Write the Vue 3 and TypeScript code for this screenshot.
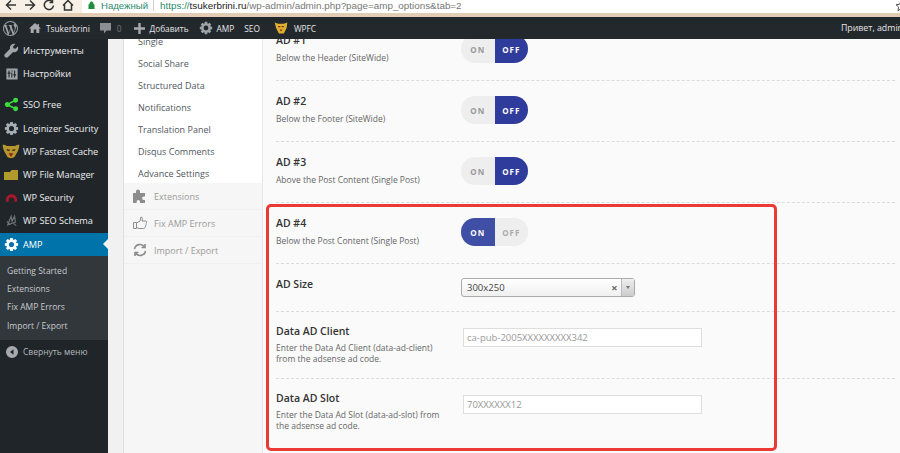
<script setup lang="ts">
type MenuItem = { label: string; icon: string; color: string; gapBefore?: boolean };

function gear(cx: number, cy: number, r: number, hole: number): string {
  // eight teeth around a ring, hole cut with evenodd
  let d = "";
  for (let i = 0; i < 8; i++) {
    const a = (i * Math.PI) / 4;
    const w = 0.24;
    const pts = [
      [r * 0.76, a - w * 1.3],
      [r, a - w * 0.8],
      [r, a + w * 0.8],
      [r * 0.76, a + w * 1.3],
    ];
    for (const [rad, t] of pts) {
      d += `${d ? "L" : "M"}${(cx + rad * Math.cos(t)).toFixed(2)} ${(cy + rad * Math.sin(t)).toFixed(2)}`;
    }
  }
  d += `ZM${cx - hole} ${cy}a${hole} ${hole} 0 1 0 ${hole * 2} 0a${hole} ${hole} 0 1 0 ${-hole * 2} 0Z`;
  return d;
}

const gearPath = gear(10, 10, 9, 3.4);

const topMenu: MenuItem[] = [
  { label: "Инструменты", icon: "wrench", color: "#a0a5aa" },
  { label: "Настройки", icon: "sliders", color: "#a0a5aa" },
  { label: "SSO Free", icon: "share", color: "#3ddc3d", gapBefore: true },
  { label: "Loginizer Security", icon: "gear", color: "#a7adb5" },
  { label: "WP Fastest Cache", icon: "tiger", color: "#b8962e" },
  { label: "WP File Manager", icon: "folder", color: "#b09a2c" },
  { label: "WP Security", icon: "shield", color: "#a5192a" },
  { label: "WP SEO Schema", icon: "seo", color: "#70757a" },
];

const subMenu = ["Getting Started", "Extensions", "Fix AMP Errors", "Import / Export"];
const tabLinks = ["Single", "Social Share", "Structured Data", "Notifications", "Translation Panel", "Disqus Comments", "Advance Settings"];

const adRows = [
  { title: "AD #1", desc: "Below the Header (SiteWide)", on: false },
  { title: "AD #2", desc: "Below the Footer (SiteWide)", on: false },
  { title: "AD #3", desc: "Above the Post Content (Single Post)", on: false },
  { title: "AD #4", desc: "Below the Post Content (Single Post)", on: true },
];

const textRows = [
  { title: "Data AD Client", desc: "Enter the Data Ad Client (data-ad-client) from the adsense ad code.", value: "ca-pub-2005XXXXXXXXX342" },
  { title: "Data AD Slot", desc: "Enter the Data Ad Slot (data-ad-slot) from the adsense ad code.", value: "70XXXXXX12" },
];
</script>

<template>
  <div class="page">
    <header class="browser">
      <div class="nav-icons">
        <svg viewBox="0 0 12 12" width="12" height="12"><path d="M11 6H2M6 1.500 1.500 6 6 10.500" /></svg>
        <svg viewBox="0 0 12 12" width="12" height="12"><path d="M1 6h9M6 1.500 10.500 6 6 10.500" /></svg>
        <svg viewBox="0 0 12 12" width="12" height="12"><path d="M10.500 6.500A4.600 4.600 0 1 1 9 2.500M9.500 0.500v3h-3" /></svg>
        <svg viewBox="0 0 12 12" width="12" height="12"><path d="M1 6.500 6 1.500l5 5M2.500 5.500V11h7V5.500" /></svg>
      </div>
      <div class="omnibox">
        <svg class="lock" viewBox="0 0 8 9" width="7" height="8"><path d="M1 4h6v5H1zM2.200 4V2.600a1.800 1.800 0 0 1 3.600 0V4" /></svg>
        <span class="secure">Надежный</span>
        <span class="sep"></span>
        <span class="url"><span class="scheme">https://</span><span class="host">tsukerbrini.ru</span>/wp-admin/admin.php?page=amp_options&amp;tab=2</span>
        <svg class="star" viewBox="0 0 12 12" width="12" height="12"><path d="M6 1l1.500 3.300 3.500.4-2.600 2.400.7 3.500L6 8.800 2.900 10.600l.7-3.500L1 4.700l3.500-.4z" /></svg>
      </div>
    </header>

    <nav class="adminbar">
      <svg class="wp" viewBox="0 0 20 20" width="15" height="15">
        <path fill="#9ea3a8" fill-rule="evenodd" d="M10 0a10 10 0 1 0 0 20 10 10 0 0 0 0-20ZM1.400 10c0-1.300.3-2.500.8-3.500l4.100 11.300A8.600 8.600 0 0 1 1.400 10Zm8.600 8.600c-.8 0-1.600-.1-2.400-.3l2.600-7.500 2.600 7.200.1.100a8.600 8.600 0 0 1-2.900.5Zm1.200-12.600c.5 0 1-.1 1-.1.500-.1.400-.8-.1-.7 0 0-1.400.1-2.300.1-.9 0-2.300-.1-2.300-.1-.5 0-.5.700-.1.700 0 0 .5.100.9.100l1.400 3.800-1.900 5.800L4.600 6c.5 0 1-.1 1-.1.500-.1.400-.8-.1-.7 0 0-1.400.1-2.300.1h-.6A8.600 8.600 0 0 1 15.800 3.600h-.1c-.9 0-1.500.8-1.500 1.600 0 .7.400 1.300.9 2.100.3.600.7 1.300.7 2.400 0 .7-.3 1.600-.7 2.700l-.9 2.900L11.200 6Zm3.200 11.500 2.600-7.600c.5-1.200.7-2.200.7-3 0-.3 0-.6-.1-.9a8.600 8.600 0 0 1-3.200 11.500Z" />
      </svg>
      <svg class="bar-icon home" viewBox="0 0 12 12" width="12" height="12"><path fill="#a7aaad" d="M6 1 0 6.500h1.700V11h3V7.500h2.600V11h3V6.500H12L10 4.700V2H8.500v1.300z" /></svg>
      <span class="bar-text site">Tsukerbrini</span>
      <svg class="bar-icon comment" viewBox="0 0 11 11" width="11" height="11"><path fill="#8c9095" d="M0 0h11v7.500H6.500L4 10.500V7.500H0z" /></svg>
      <span class="bar-text zero">0</span>
      <svg class="bar-icon plus" viewBox="0 0 11 11" width="11" height="11"><path fill="#a7aaad" d="M4.300 0h2.400v4.300H11v2.400H6.700V11H4.300V6.700H0V4.300h4.300z" /></svg>
      <span class="bar-text add">Добавить</span>
      <svg class="bar-icon cog" viewBox="0 0 20 20" width="14" height="14"><path fill="#9ea3a8" fill-rule="evenodd" :d="gearPath" /></svg>
      <span class="bar-text amp">AMP</span>
      <span class="bar-text seo">SEO</span>
      <svg class="bar-icon tiger" viewBox="0 0 20 20" width="14" height="14">
        <path fill="#e0b030" d="M1 2l5 2h8l5-2-1 8-4 8H7L3 10z" />
        <path fill="#7a2a14" d="M6 7h3v2H6zM11 7h3v2h-3zM8 12h4l-2 3z" />
      </svg>
      <span class="bar-text wpfc">WPFC</span>
      <span class="bar-text hello">Привет, admin</span>
    </nav>

    <div class="workspace">
      <aside class="sidebar">
        <ul class="menu">
          <li v-for="item in topMenu" :key="item.label" class="menu-row" :class="{ spaced: item.gapBefore }">
            <span class="menu-icon">
              <svg v-if="item.icon === 'wrench'" viewBox="0 0 20 20" width="15" height="15"><path :fill="item.color" d="M18.500 4.500l-3.300 3.200-2.600-.6-.6-2.600L15.200 1.300c-2-.7-4.300-.3-5.800 1.200-1.500 1.500-1.900 3.500-1.300 5.300L1.300 14.600a2.900 2.900 0 0 0 4.100 4.100l6.800-6.800c1.800.6 3.800.2 5.300-1.300 1.500-1.500 1.900-3.900 1-6.100z" /></svg>
              <svg v-else-if="item.icon === 'sliders'" viewBox="0 0 20 20" width="14" height="14"><path :fill="item.color" fill-rule="evenodd" d="M2 2h16v16H2zM5 5v3H3.800v1.500H5V15h1.500V9.500h1.200V8H6.500V5zM13 5v5.500h-1.200V12H13v3h1.500v-3h1.200v-1.500h-1.200V5zM9 5v1.500h2V5zM9 8v7h1.500V8z" /></svg>
              <svg v-else-if="item.icon === 'share'" viewBox="0 0 20 20" width="15" height="15"><path :fill="item.color" d="M15.500 1a3.300 3.300 0 0 1 0 6.600c-.9 0-1.700-.4-2.300-1L7.800 9.300a3 3 0 0 1 0 1.400l5.400 2.700c.6-.6 1.400-1 2.300-1a3.300 3.300 0 1 1-3.300 3.300v-.4l-5.600-2.800a3.300 3.300 0 1 1 0-5l5.600-2.800v-.4A3.300 3.300 0 0 1 15.500 1z" /></svg>
              <svg v-else-if="item.icon === 'gear'" viewBox="0 0 20 20" width="15" height="15"><path :fill="item.color" fill-rule="evenodd" :d="gearPath" /></svg>
              <svg v-else-if="item.icon === 'tiger'" class="wide" viewBox="0 0 20 18" width="18" height="15">
                <path fill="#b8962e" d="M0 1c2 0 4 .5 5 1.500h10C16 1.500 18 1 20 1c0 3-1 6-2 8l-4 7c-2 1.300-6 1.300-8 0L2 9C1 7 0 4 0 1z" />
                <path fill="#3a2a14" d="M4.500 6l4 1v1.500l-3-.5zM15.500 6l-4 1v1.500l3-.5z" />
                <path fill="#8a2a18" d="M7 11h6l-3 4.500z" />
              </svg>
              <svg v-else-if="item.icon === 'folder'" class="wide" viewBox="0 0 14 10" width="14" height="12"><path :fill="item.color" d="M0 2h6l1.500-2H14v10H0z" /></svg>
              <svg v-else-if="item.icon === 'shield'" viewBox="0 0 12 8" width="11" height="8"><path :fill="item.color" d="M0 8V5a6 5 0 0 1 12 0v3H9V6a3 2.500 0 0 0-6 0v2z" /></svg>
              <svg v-else viewBox="0 0 14 14" width="12" height="13"><path fill="none" :stroke="item.color" stroke-width="1.300" d="M2 12 6 2l1 6 3-6 1 7-9 3zM1 8l4 4M8 10l4 3" /></svg>
            </span>
            <span class="menu-label">{{ item.label }}</span>
          </li>
          <li class="menu-row current">
            <span class="menu-icon">
              <svg viewBox="0 0 20 20" width="15" height="15"><path fill="#fff" fill-rule="evenodd" :d="gearPath" /></svg>
            </span>
            <span class="menu-label">AMP</span>
          </li>
        </ul>
        <ul class="submenu">
          <li v-for="name in subMenu" :key="name">{{ name }}</li>
        </ul>
        <div class="menu-row collapse">
          <span class="menu-icon">
            <svg viewBox="0 0 12 12" width="12" height="12"><path fill="#a7aaad" fill-rule="evenodd" d="M6 0a6 6 0 1 1 0 12A6 6 0 0 1 6 0Zm1.500 3.200L4 6l3.500 2.800z" /></svg>
          </span>
          <span class="menu-label">Свернуть меню</span>
        </div>
      </aside>

      <main class="content">
        <section class="tabs">
          <div class="tab-links">
            <a v-for="link in tabLinks" :key="link">{{ link }}</a>
          </div>
          <div class="tab-heading">
            <svg viewBox="0 0 14 14" width="14" height="14"><path fill="#8d8d8d" d="M5 0.500a2 2 0 0 1 2 2V4h5v3.500h-1.200a1.700 1.700 0 0 0 0 3.400H12V14H7v-1.200a1.700 1.700 0 0 0-3.400 0V14H0V4h3V2.500a2 2 0 0 1 2-2z" /></svg>
            <span>Extensions</span>
          </div>
          <div class="tab-heading">
            <svg viewBox="0 0 14 14" width="14" height="14"><path fill="none" stroke="#8d8d8d" d="M.500 6.500h3v6h-3zM3.500 7 7 5l1-4c1.500 0 1.500 2 1 4h4c.8 0 .8 2 0 2.200.5.500.3 1.800-.3 2 .2.800-.1 1.600-.7 1.800 0 1-.5 1.500-1.500 1.500H6l-2.500-1" /></svg>
            <span>Fix AMP Errors</span>
          </div>
          <div class="tab-heading">
            <svg viewBox="0 0 14 14" width="14" height="14"><path fill="none" stroke="#8d8d8d" stroke-width="1.600" d="M1.500 6a5.500 5.500 0 0 1 10-2M12.500 8a5.500 5.500 0 0 1-10 2M12 1v3.500H8.500M2 13V9.500h3.500" /></svg>
            <span>Import / Export</span>
          </div>
        </section>

        <section class="settings">
          <div v-for="row in adRows" :key="row.title" class="row">
            <div class="row-label">
              <h3>{{ row.title }}</h3>
              <p>{{ row.desc }}</p>
            </div>
            <div class="toggle" :class="{ on: row.on }">
              <span class="half left">ON</span>
              <span class="half right">OFF</span>
            </div>
          </div>

          <div class="row size-row">
            <div class="row-label"><h3>AD Size</h3></div>
            <div class="select">
              <span class="select-value">300x250</span>
              <span class="select-clear">×</span>
              <span class="select-arrow"></span>
            </div>
          </div>

          <div v-for="row in textRows" :key="row.title" class="row text-row">
            <div class="row-label">
              <h3>{{ row.title }}</h3>
              <p>{{ row.desc }}</p>
            </div>
            <div class="text-input">{{ row.value }}</div>
          </div>
        </section>

        <div class="highlight"></div>
      </main>
    </div>
  </div>
</template>

<style scoped>
.page {
  width: 900px;
  height: 453px;
  overflow: hidden;
  display: flex;
  flex-direction: column;
  font-family: "Open Sans", "Noto Sans", sans-serif;
  background: #f1f1f1;
}

/* browser chrome, cut off at the top */
.browser {
  height: 13px;
  flex: none;
  display: flex;
  background: #f6f0e6;
  border-bottom: 4px solid #e2ccb4;
  box-sizing: content-box;
  overflow: hidden;
}
.nav-icons {
  width: 82px;
  flex: none;
  display: flex;
  gap: 7px;
  padding-left: 5px;
  box-sizing: border-box;
  margin-top: -1px;
}
.nav-icons svg {
  fill: none;
  stroke: #333;
  stroke-width: 1.5;
}
.omnibox {
  flex: 1;
  display: flex;
  align-items: flex-start;
  background: #fff;
  font-family: "Liberation Sans", Arial, sans-serif;
  font-size: 9.600px;
  line-height: 11px;
  padding-left: 6px;
}
.lock {
  margin-top: 1px;
  fill: #1e8e3e;
  stroke: #1e8e3e;
  stroke-width: 0.8;
}
.secure {
  margin-left: 6px;
  color: #2b8a6c;
}
.sep {
  width: 1px;
  height: 11px;
  background: #ccc;
  margin: 0 6px 0 5px;
}
.url {
  color: #777;
  font-size: 9.850px;
  white-space: nowrap;
}
.scheme {
  color: #2b8a6c;
}
.host {
  color: #222;
}
.star {
  margin-left: auto;
  margin-right: -7px;
  fill: none;
  stroke: #555;
}

.adminbar {
  height: 22px;
  flex: none;
  display: flex;
  align-items: center;
  background: #23282d;
  padding-left: 3px;
}
.bar-text {
  color: #e6e6e6;
  font-size: 8.300px;
  font-weight: 500;
  white-space: nowrap;
}
.home { margin-left: 11px; }
.site { margin-left: 5px; }
.comment { margin-left: 10px; }
.zero { margin-left: 6px; color: #777; }
.plus { margin-left: 12px; }
.add { margin-left: 5px; }
.cog { margin-left: 10px; }
.amp { margin-left: 4px; }
.seo { margin-left: 10px; }
.tiger { margin-left: 14px; }
.wpfc { margin-left: 6px; }
.hello {
  margin-left: auto;
  margin-right: -3px;
  font-weight: 400;
  font-size: 8.800px;
}

.workspace {
  flex: 1;
  min-height: 0;
  display: flex;
}

.sidebar {
  width: 108px;
  flex: none;
  background: #20252a;
  color: #eee;
  font-size: 9.200px;
  font-weight: 500;
}
.menu,
.submenu {
  list-style: none;
  margin: 0;
  padding: 0;
}
.menu-row {
  height: 23.200px;
  display: flex;
  align-items: center;
  position: relative;
}
.menu-row.spaced {
  margin-top: 8px;
}
.menu-icon {
  width: 23px;
  flex: none;
  display: flex;
  justify-content: center;
  align-items: center;
}
.menu-icon .wide {
  margin-left: -2px;
}
.menu-label {
  white-space: nowrap;
}
.current {
  background: #0073aa;
  color: #fff;
}
.current::after {
  content: "";
  position: absolute;
  right: 0;
  top: 6px;
  border: 5px solid transparent;
  border-right: 5px solid #f1f1f1;
  border-left: 0;
}
.submenu {
  background: #32373c;
  padding: 6px 0 5px;
  font-size: 8.500px;
  font-weight: 400;
  color: #c8cacc;
}
.submenu li {
  height: 18.400px;
  line-height: 18.400px;
  padding-left: 7px;
}
.collapse {
  font-weight: 400;
  font-size: 8.500px;
  color: #b4b9be;
}

.content {
  flex: 1;
  min-width: 0;
  display: flex;
  position: relative;
  padding-left: 15px;
  overflow: hidden;
}

.tabs {
  width: 139px;
  flex: none;
  background: #f6f6f6;
  border-left: 1px solid #dedede;
  box-sizing: border-box;
  font-size: 9px;
  font-weight: 500;
}
.tab-links {
  background: #fff;
  height: 155px;
  margin-top: -11px;
  padding-top: 3px;
  box-sizing: border-box;
}
.tab-links a {
  display: block;
  height: 22px;
  line-height: 22px;
  padding-left: 14px;
  color: #50575e;
  white-space: nowrap;
}
.tab-heading {
  height: 27px;
  display: flex;
  align-items: center;
  gap: 7px;
  padding-left: 9px;
  color: #9a9a9a;
  border-bottom: 1px solid #f0f0f0;
  box-sizing: border-box;
}

.settings {
  flex: 1;
  min-width: 0;
  margin-top: -19px;
  padding: 0 5px 0 14px;
  background: #fafafa;
  box-shadow: inset 1px 0 0 #e8e8e8;
}
.row {
  height: 61px;
  display: flex;
  align-items: flex-start;
  padding-top: 13px;
  border-bottom: 1px dashed #dcdcdc;
  box-sizing: border-box;
}
.row-label {
  width: 185px;
  flex: none;
}
.row-label h3 {
  margin: 0;
  font-size: 10.500px;
  line-height: 14px;
  font-weight: 600;
  color: #333;
}
.row-label p {
  margin: 5px 0 0;
  font-size: 8.500px;
  line-height: 11px;
  color: #666;
}

.toggle {
  width: 67px;
  height: 28px;
  margin-top: 2px;
  display: flex;
  font-size: 8px;
  font-weight: 700;
  letter-spacing: 1px;
  border-radius: 14px;
  overflow: hidden;
  background: #eee;
}
.half {
  flex: 1;
  display: flex;
  align-items: center;
  justify-content: center;
  color: #999;
}
.toggle .right {
  background: #2f3c9c;
  color: #fff;
}
.toggle.on .left {
  background: #3f4fa5;
  color: #fff;
}
.toggle.on .right {
  background: #eee;
  color: #aaa;
}

.size-row {
  height: 48px;
}
.select {
  width: 174px;
  height: 19px;
  margin-top: 1px;
  display: flex;
  align-items: center;
  border: 1px solid #aaa;
  border-radius: 3px;
  box-sizing: border-box;
  background: linear-gradient(#fff, #f0f0f0);
  font-size: 9.500px;
  color: #444;
}
.select-value {
  flex: 1;
  padding-left: 5px;
}
.select-clear {
  width: 13px;
  font-size: 11px;
  font-weight: 700;
  color: #666;
  text-align: center;
}
.select-arrow {
  width: 13px;
  height: 100%;
  position: relative;
  border-left: 1px solid #bbb;
  background: linear-gradient(#eee, #ccc);
  box-sizing: border-box;
}
.select-arrow::after {
  content: "";
  position: absolute;
  left: 4px;
  top: 7px;
  border: 2.500px solid transparent;
  border-top: 3px solid #777;
  border-bottom: 0;
}

.text-row {
  height: 67px;
  padding-top: 12px;
}
.text-row .row-label {
  width: 187px;
}
.text-row .row-label p {
  width: 170px;
  margin-top: 4px;
}
.text-row:last-child {
  border-bottom: 0;
}
.text-input {
  width: 239px;
  height: 19px;
  margin-top: 4px;
  padding-left: 3px;
  background: #fff;
  border: 1px solid #dedede;
  box-sizing: border-box;
  font-size: 9.500px;
  line-height: 17px;
  color: #999;
}

/* annotation drawn over the screenshot */
.highlight {
  position: absolute;
  left: 158px;
  top: 165px;
  width: 511px;
  height: 247px;
  border: 3px solid #ea3a33;
  border-radius: 5px;
  box-sizing: border-box;
  pointer-events: none;
}
</style>

<style>
html,
body {
  margin: 0;
  overflow: hidden;
}
</style>
